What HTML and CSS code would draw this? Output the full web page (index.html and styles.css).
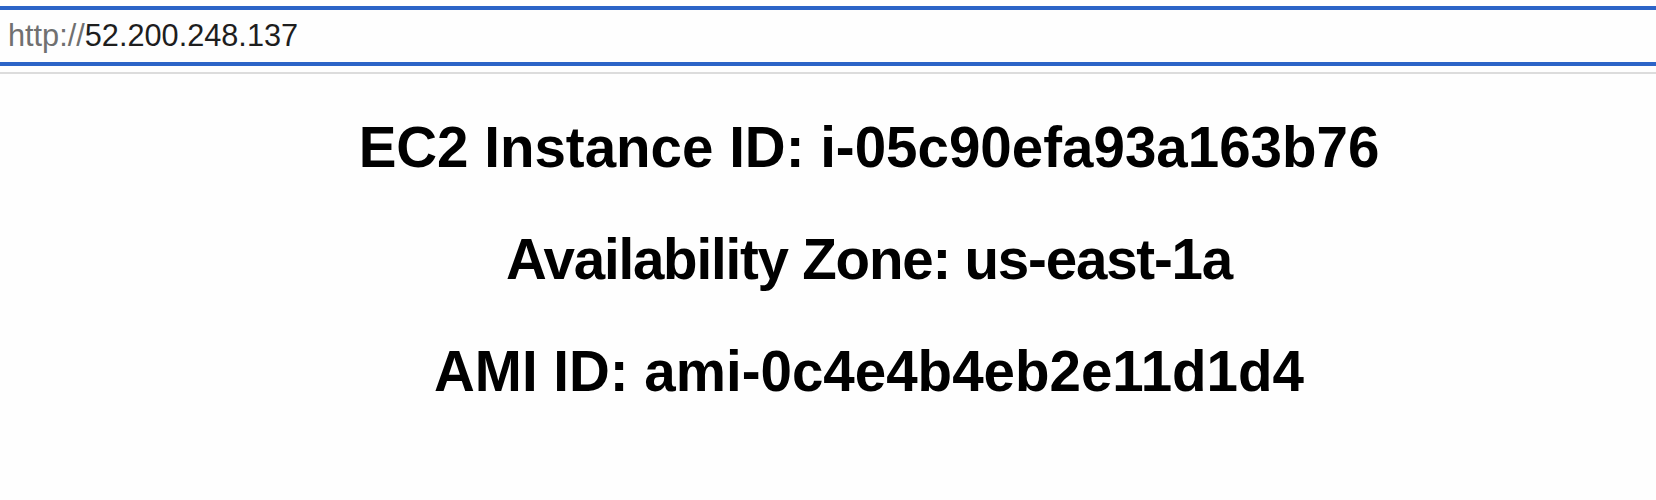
FILE: index.html
```html
<!DOCTYPE html>
<html lang="en">
<head>
<meta charset="utf-8">
<title>EC2 Instance</title>
<link rel="stylesheet" href="styles.css">
</head>
<body>
<div class="urlbar"><span class="scheme">http://</span><span class="host">52.200.248.137</span></div>
<div class="divider"></div>
<main class="content">
  <h1 class="line">EC2 Instance ID: i-05c90efa93a163b76</h1>
  <h1 class="line line-tight">Availability Zone: us-east-1a</h1>
  <h1 class="line">AMI ID: ami-0c4e4b4eb2e11d1d4</h1>
</main>
</body>
</html>
```
FILE: styles.css
```css
html, body {
  margin: 0;
  padding: 0;
  background: #fefefe;
}
body {
  font-family: "Liberation Sans", Arial, sans-serif;
  color: #000;
}
.urlbar {
  margin-top: 6px;
  border-top: 4px solid #2c64c7;
  border-bottom: 4px solid #2c64c7;
  height: 52px;
  line-height: 52px;
  font-size: 30.7px;
  padding-left: 8px;
  white-space: nowrap;
}
.scheme { color: #707070; }
.host { color: #1e1e1e; }
.divider {
  margin-top: 6px;
  height: 2px;
  background: #dcdcdc;
}
.content {
  padding-top: 18px;
  padding-left: 82px;
  text-align: center;
}
.line {
  margin: 0;
  font-size: 56.5px;
  font-weight: bold;
  line-height: 112px;
}
.line-tight {
  letter-spacing: -1.2px;
}
```
